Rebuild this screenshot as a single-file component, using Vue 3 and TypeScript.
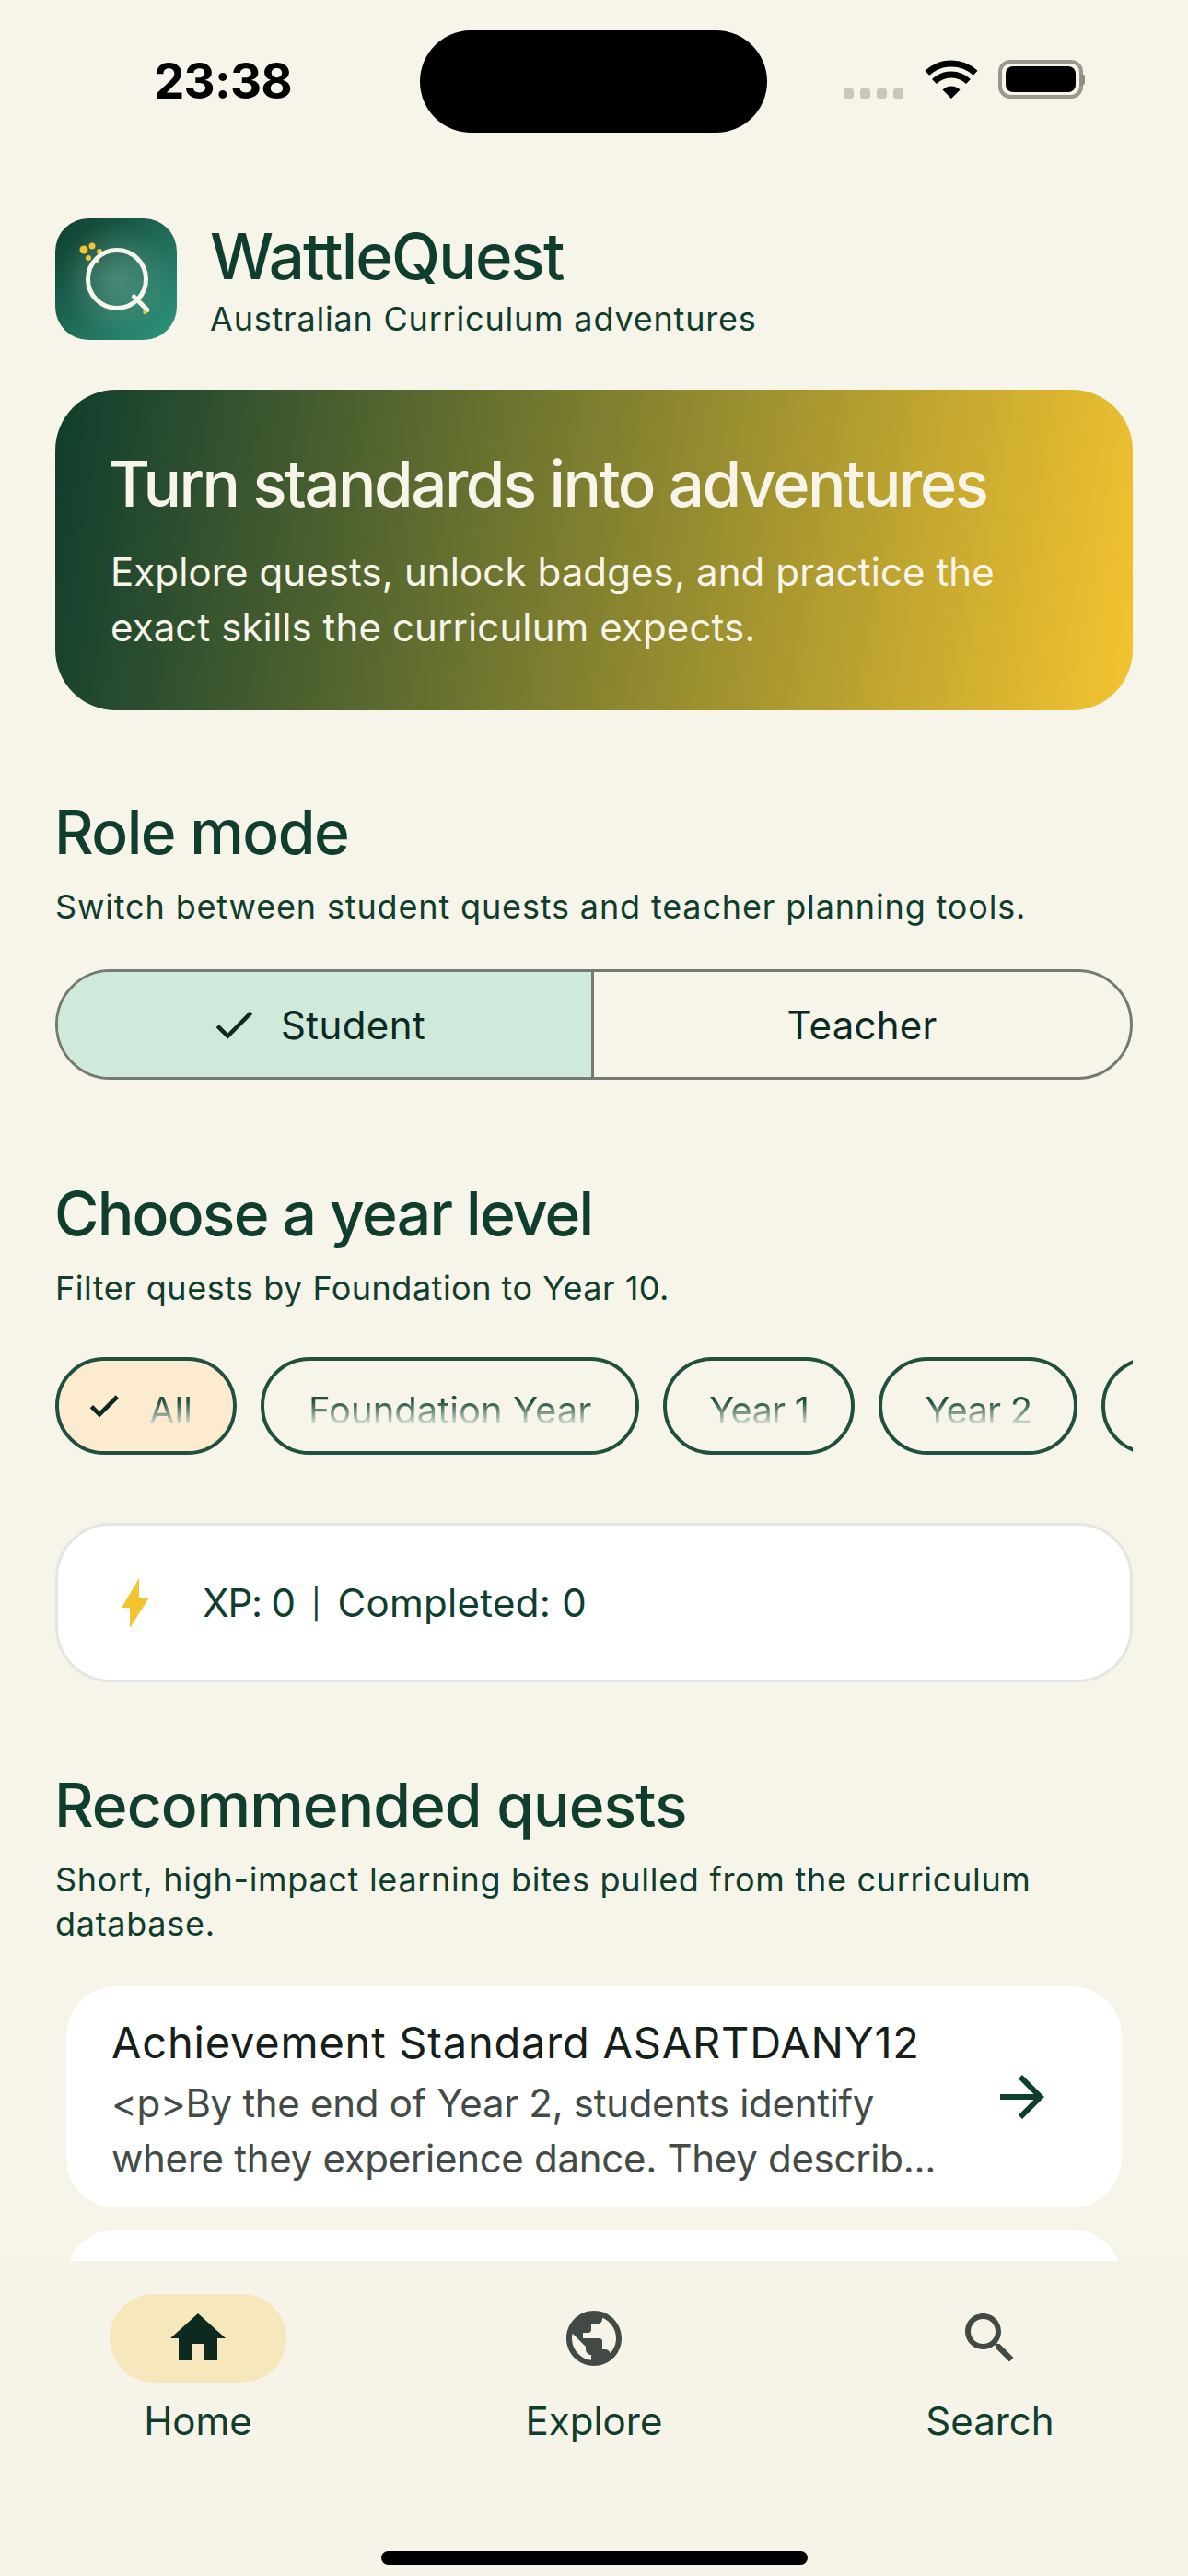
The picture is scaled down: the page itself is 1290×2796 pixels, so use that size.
<script setup lang="ts">
const chips: string[] = ['Foundation Year', 'Year 1', 'Year 2', 'Year 3']
</script>

<template>
  <div class="app">
    <div class="status">
      <span class="time">23:38</span>
      <div class="island"></div>
      <div class="status-right">
        <div class="dots"><i></i><i></i><i></i><i></i></div>
        <svg class="wifi" width="58" height="42" viewBox="0 0 58 42">
          <path d="M2.8 15.8a38.500 38.500 0 0 1 52.400 0" fill="none" stroke="#000" stroke-width="7" transform="translate(0 -1.500)" />
          <path d="M10.500 23.500a26.500 26.500 0 0 1 37 0" fill="none" stroke="#000" stroke-width="7" />
          <path d="M29 42 19.500 32.500a13.500 13.500 0 0 1 19 0z" fill="#000" />
        </svg>
        <div class="battery"><div class="battery-fill"></div></div>
        <div class="nub"></div>
      </div>
    </div>

    <main class="main">
      <header class="brand">
        <svg class="logo" width="132" height="132" viewBox="0 0 132 132">
          <defs>
            <linearGradient id="lg" x1="0" y1="0" x2="1" y2="1">
              <stop offset="0" stop-color="#0f3d2e" />
              <stop offset="1" stop-color="#2f967d" />
            </linearGradient>
            <radialGradient id="rg" cx="67" cy="66" r="60" gradientUnits="userSpaceOnUse">
              <stop offset="0" stop-color="#fff" stop-opacity=".2" />
              <stop offset="1" stop-color="#fff" stop-opacity="0" />
            </radialGradient>
          </defs>
          <rect width="132" height="132" rx="36" fill="url(#lg)" />
          <rect width="132" height="132" rx="36" fill="url(#rg)" />
          <g fill="#f4c430">
            <circle cx="31" cy="34" r="4.500" />
            <circle cx="40" cy="30" r="3.500" />
            <circle cx="36" cy="43" r="3" />
            <circle cx="48" cy="36" r="3" />
            <circle cx="45" cy="46" r="2.500" />
          </g>
          <circle cx="67" cy="66" r="31.500" fill="none" stroke="#f7f5eb" stroke-width="5" />
          <path d="M85.500 85 100 99.500" fill="none" stroke="#f7f5eb" stroke-width="5" stroke-linecap="round" />
          <circle cx="97.500" cy="102" r="2.300" fill="#f4c430" />
        </svg>
        <div class="brand-text">
          <h1 class="brand-title">WattleQuest</h1>
          <p class="brand-sub">Australian Curriculum adventures</p>
        </div>
      </header>

      <section class="hero">
        <h2 class="hero-title">Turn standards into adventures</h2>
        <p class="hero-body">Explore quests, unlock badges, and practice the exact skills the curriculum expects.</p>
      </section>

      <section class="role">
        <h2 class="heading">Role mode</h2>
        <p class="sub">Switch between student quests and teacher planning tools.</p>
        <div class="segments">
          <div class="segment selected">
            <svg width="54" height="54" viewBox="0 0 24 24"><path d="M9 16.170 4.830 12l-1.420 1.410L9 19 21 7l-1.410-1.410z" fill="#0c2a1f" /></svg>
            <span>Student</span>
          </div>
          <div class="segment"><span>Teacher</span></div>
        </div>
      </section>

      <section class="years">
        <h2 class="heading heading-tight">Choose a year level</h2>
        <p class="sub sub-tight">Filter quests by Foundation to Year 10.</p>
        <div class="chips">
          <div class="chip chip-on">
            <svg width="40" height="40" viewBox="0 0 24 24"><path d="M9 16.170 4.830 12l-1.420 1.410L9 19 21 7l-1.410-1.410z" fill="#0c2a1f" stroke="#0c2a1f" stroke-width=".8" /></svg>
            <span class="chip-label">All</span>
          </div>
          <div v-for="c in chips" :key="c" class="chip" :class="{ 'chip-year': c.startsWith('Year') }">
            <span class="chip-label">{{ c }}</span>
          </div>
        </div>
      </section>

      <section class="xp">
        <svg width="72" height="72" viewBox="0 0 72 72"><path d="M37 9V30H48L27 63V41H18z" fill="#f4c430" /></svg>
        <span><span class="xp-value">XP: 0</span><span class="sep">|</span><span class="xp-done">Completed: 0</span></span>
      </section>

      <section class="quests">
        <h2 class="heading heading-wide">Recommended quests</h2>
        <p class="sub sub-wrap">Short, high-impact learning bites pulled from the curriculum database.</p>
        <article class="card">
          <div class="card-text">
            <h3 class="card-title">Achievement Standard ASARTDANY12</h3>
            <p class="card-body">&lt;p&gt;By the end of Year 2, students identify<br />where they experience dance. They describ...</p>
          </div>
          <svg width="72" height="72" viewBox="0 0 24 24"><path d="m12 4-1.410 1.410L16.170 11H4v2h12.170l-5.580 5.590L12 20l8-8z" fill="#0f3d2e" /></svg>
        </article>
        <article class="card card-next"></article>
      </section>
    </main>

    <nav class="nav">
      <div class="nav-items">
        <div class="nav-item">
          <div class="nav-pill on">
            <svg width="72" height="72" viewBox="0 0 24 24"><path d="M10 20v-6h4v6h5v-8h3L12 3 2 12h3v8z" fill="#0c2a1f" /></svg>
          </div>
          <span>Home</span>
        </div>
        <div class="nav-item">
          <div class="nav-pill">
            <svg width="72" height="72" viewBox="0 0 24 24"><path d="M12 2C6.480 2 2 6.480 2 12s4.480 10 10 10 10-4.480 10-10S17.520 2 12 2zm-1 17.930c-3.950-.490-7-3.850-7-7.930 0-.620.080-1.210.210-1.790L9 15v1c0 1.100.900 2 2 2v1.930zm6.900-2.540c-.260-.810-1-1.390-1.900-1.390h-1v-3c0-.550-.450-1-1-1H8v-2h2c.550 0 1-.450 1-1V7h2c1.100 0 2-.900 2-2v-.410c2.930 1.190 5 4.060 5 7.410 0 2.080-.800 3.970-2.100 5.390z" fill="#434a46" /></svg>
          </div>
          <span>Explore</span>
        </div>
        <div class="nav-item">
          <div class="nav-pill">
            <svg width="72" height="72" viewBox="0 0 24 24"><path d="M15.500 14h-.790l-.280-.270C15.410 12.590 16 11.110 16 9.500 16 5.910 13.090 3 9.500 3S3 5.910 3 9.500 5.910 16 9.500 16c1.610 0 3.090-.590 4.230-1.570l.270.280v.790l5 4.990L20.490 19l-4.990-5zm-6 0C7.010 14 5 11.990 5 9.500S7.010 5 9.500 5 14 7.010 14 9.500 11.990 14 9.500 14z" fill="#434a46" /></svg>
          </div>
          <span>Search</span>
        </div>
      </div>
      <div class="home-bar"></div>
    </nav>
  </div>
</template>

<style>
html, body { margin: 0; background: #f7f5ea; }
</style>

<style scoped>
* { box-sizing: border-box; }
.app {
  width: 1290px;
  height: 2796px;
  background: #f7f5ea;
  font-family: Inter, "Noto Sans", sans-serif;
  color: #0f3d2e;
  display: flex;
  flex-direction: column;
  overflow: hidden;
}
h1, h2, h3, p { margin: 0; font-weight: 400; }

/* status bar */
.status { height: 177px; flex: none; display: flex; align-items: flex-start; padding: 33px 0 0 167px; }
.time { width: 289px; font-family: Inter, sans-serif; font-weight: 700; font-size: 53px; line-height: 60px; color: #000; margin-top: 25px; letter-spacing: -.8px; }
.island { width: 377px; height: 111px; background: #000; border-radius: 56px; flex: none; }
.status-right { display: flex; align-items: flex-end; margin: 32px 0 0 83px; height: 42px; position: relative; }
.dots { display: flex; gap: 7px; }
.dots i { display: block; width: 11px; height: 11px; border-radius: 3px; background: #c9c7bb; }
.wifi { margin-left: 23px; }
.battery { width: 92px; height: 42px; margin-left: 22px; border: 4px solid #9a988e; border-radius: 13px; padding: 3px 4px; }
.battery-fill { width: 100%; height: 100%; background: #000; border-radius: 8px; }
.nub { width: 5px; height: 13px; background: #8f8d84; border-radius: 0 4px 4px 0; align-self: center; margin-left: -3px; }

/* scroll content */
.main { flex: 1; min-height: 0; overflow: hidden; padding: 60px 60px 0; }
.brand { display: flex; align-items: center; gap: 36px; height: 132px; }
.logo { flex: none; display: block; }
.brand-text { padding-top: 3px; }
.brand-title { font-size: 69px; line-height: 78px; font-weight: 500; letter-spacing: -1.8px; }
.brand-sub { font-size: 36px; line-height: 48px; letter-spacing: .8px; margin-top: 5px; }

.hero {
  margin-top: 54px;
  height: 348px;
  padding: 60px 60px 0;
  border-radius: 66px;
  background: linear-gradient(100deg, #0f3d2e 0%, #f4c430 100%);
  color: #f7f5ea;
}
.hero-title { font-size: 69px; line-height: 84px; font-weight: 500; letter-spacing: -2.5px; white-space: nowrap; margin-left: -2px; }
.hero-body { font-size: 42px; line-height: 60px; margin-top: 24px; letter-spacing: .1px; }

.role { margin-top: 93px; }
.heading { font-size: 66px; line-height: 78px; font-weight: 500; letter-spacing: -1.5px; margin-left: -1px; }
.heading-tight { letter-spacing: -1.75px; }
.heading-wide { letter-spacing: -1px; }
.sub { font-size: 36px; line-height: 48px; margin-top: 18px; letter-spacing: .85px; }
.sub-tight { letter-spacing: .5px; }
.sub-wrap { margin-top: 18px; letter-spacing: .7px; }

.segments { display: grid; grid-template-columns: 1fr 1fr; height: 120px; margin-top: 44px; border: 3px solid #747a74; border-radius: 60px; overflow: hidden; }
.segment { display: flex; align-items: center; justify-content: center; gap: 24px; font-size: 42px; letter-spacing: .2px; color: #0c2a1f; }
.segment.selected { background: #cfe9db; border-right: 3px solid #747a74; padding-right: 16px; letter-spacing: .4px; }

.years { margin-top: 106px; }
.chips { display: flex; gap: 26px; margin-top: 51px; overflow: hidden; }
.chip { flex: none; height: 106px; border: 4px solid #1f5040; border-radius: 53px; padding: 0 48px; display: flex; align-items: center; }
.chip-year { padding: 0 46px; letter-spacing: -.8px; }
.chip-on { background: #fcebcf; padding: 0 44px 0 29px; gap: 29px; }
.chip-label {
  font-size: 40px;
  line-height: 50px;
  white-space: nowrap;
  background: linear-gradient(180deg, #1f5040 0%, #1f5040 30%, #d3ddd2 78%, #d3ddd2 100%);
  -webkit-background-clip: text;
  background-clip: text;
  color: transparent;
  margin-top: 10px;
}

.xp { margin-top: 74px; height: 173px; background: #fff; border: 3px solid #e3e6e3; border-radius: 60px; display: flex; align-items: center; gap: 34px; padding-left: 51px; font-size: 42px; }
.xp-value { letter-spacing: -1.2px; }
.xp-done { letter-spacing: .3px; }
.sep { font-size: 32px; margin: 0 18px; position: relative; top: -3px; }

.quests { margin-top: 94px; }
.card { margin: 0 12px; display: flex; align-items: center; justify-content: space-between; background: #fff; border-radius: 54px; height: 240px; padding: 0 72px 0 49px; margin-top: 44px; }
.card-next { margin-top: 24px; }
.card-text { min-width: 0; padding-top: 7px; }
.card-title { font-size: 47px; line-height: 60px; color: #15201b; letter-spacing: .8px; }
.card-body { font-size: 42px; line-height: 60px; color: #444b47; margin-top: 6px; white-space: nowrap; letter-spacing: -.3px; }

.nav { flex: none; height: 342px; background: #f6f4e9; display: flex; flex-direction: column; align-items: center; position: relative; }
.nav-items { display: flex; width: 100%; padding-top: 36px; }
.nav-item { flex: 1; display: flex; flex-direction: column; align-items: center; font-size: 42px; line-height: 60px; }
.nav-pill { width: 192px; height: 96px; border-radius: 48px; display: flex; align-items: center; justify-content: center; margin-bottom: 12px; }
.nav-pill.on { background: #f6e7bc; }
.home-bar { width: 463px; height: 15px; border-radius: 8px; background: #000; margin-top: 111px; }
</style>
